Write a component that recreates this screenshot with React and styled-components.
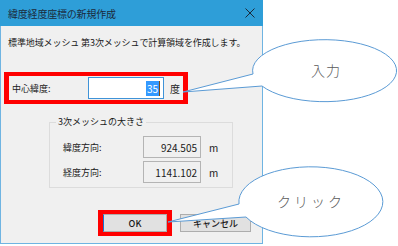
import React from "react";
import styled, { createGlobalStyle } from "styled-components";

const GlobalStyle = createGlobalStyle`
  html, body {
    margin: 0;
    padding: 0;
    background: #ffffff;
  }
  body {
    font-family: "Noto Sans CJK JP", "Noto Sans", sans-serif;
  }
`;

const JP = `"Noto Sans CJK JP", "Noto Sans", sans-serif`;

const Canvas = styled.div`
  position: relative;
  width: 398px;
  height: 246px;
  background: #ffffff;
  overflow: hidden;
`;

const Dialog = styled.div`
  width: 263px;
  height: 244px;
  box-sizing: border-box;
  background: #f0f0f0;
  border: 1px solid #6fb4e2;
  border-top: none;
  display: flex;
  flex-direction: column;
`;

const TitleBar = styled.div`
  height: 26px;
  margin: 0 -1px;
  background: #2e9ed8;
  display: flex;
  align-items: center;
  justify-content: space-between;
  padding: 0 8px 0 8px;
  flex-shrink: 0;
`;

const Title = styled.span`
  font-family: ${JP};
  font-size: 10px;
  color: #1b2a3a;
  letter-spacing: -0.2px;
`;

const Body = styled.div`
  display: flex;
  flex-direction: column;
  padding-left: 3px;
`;

const Message = styled.div`
  margin: 11px 0 0 4px;
  font-family: ${JP};
  font-size: 9px;
  line-height: 12px;
  color: #1a1a1a;
  white-space: nowrap;
  letter-spacing: -0.1px;
`;

const Highlight = styled.div`
  box-sizing: border-box;
  border-style: solid;
  border-color: #ff0000;
  border-width: ${(p) => p.$bw || "4px 5px"};
  display: flex;
  align-items: center;
`;

const FieldRow = styled(Highlight)`
  margin-top: 23px;
  width: 184px;
  height: 32px;
  padding-left: 3px;
`;

const Label = styled.span`
  font-family: ${JP};
  font-size: 9px;
  color: #1a1a1a;
  width: ${(p) => p.$w}px;
  flex-shrink: 0;
  white-space: nowrap;
`;

const Input = styled.div`
  box-sizing: border-box;
  width: 76px;
  height: 22px;
  background: #ffffff;
  border: 1px solid #3f93d8;
  display: flex;
  align-items: center;
  justify-content: flex-end;
  padding-right: 3px;
`;

const Selected = styled.span`
  background: #3399ff;
  color: #ffffff;
  font-family: ${JP};
  font-size: 10px;
  line-height: 15px;
  padding: 0 1px;
`;

const Caret = styled.span`
  width: 1px;
  height: 15px;
  background: #7a4a1a;
`;

const Unit = styled.span`
  font-family: ${JP};
  font-size: ${(p) => p.$size || 9}px;
  color: #1a1a1a;
  margin-left: ${(p) => p.$gap}px;
`;

const Group = styled.div`
  position: relative;
  margin: 18px 0 0 45px;
  width: 184px;
  height: 66px;
  box-sizing: border-box;
  border: 1px solid #dcdcdc;
  padding: 13px 0 0 13px;
  display: flex;
  flex-direction: column;
  gap: 3px;
`;

const Caption = styled.span`
  position: absolute;
  top: -7px;
  left: 6px;
  padding: 0 2px;
  background: #f0f0f0;
  font-family: ${JP};
  font-size: 9px;
  line-height: 12px;
  color: #1a1a1a;
  white-space: nowrap;
`;

const SizeRow = styled.div`
  display: flex;
  align-items: center;
`;

const ValueBox = styled.div`
  box-sizing: border-box;
  width: 58px;
  height: 22px;
  border: 1px solid #b4b4b4;
  background: #f0f0f0;
  display: flex;
  align-items: center;
  justify-content: flex-end;
  padding-right: 3px;
  font-family: ${JP};
  font-size: 10px;
  color: #1a1a1a;
`;

const ButtonRow = styled.div`
  margin: 22px 0 0 94px;
  display: flex;
  align-items: center;
`;

const OkFrame = styled(Highlight)`
  width: 74px;
  height: 26px;
`;

const Button = styled.div`
  box-sizing: border-box;
  width: ${(p) => p.$w}px;
  height: 18px;
  background: #e1e1e1;
  border: 1px solid #adadad;
  border-left-color: ${(p) => (p.$focus ? "#1a73d0" : "#adadad")};
  display: flex;
  align-items: center;
  justify-content: center;
  font-family: ${JP};
  font-size: 9px;
  font-weight: 500;
  color: #1a1a1a;
  margin-left: ${(p) => p.$gap || 0}px;
`;

const Overlay = styled.svg`
  position: absolute;
  left: 0;
  top: 0;
  pointer-events: none;
`;

const CloseIcon = () => (
  <svg width="10" height="10" viewBox="0 0 10 10">
    <path d="M0.5 0.5 L9.5 9.5 M9.5 0.5 L0.5 9.5" stroke="#1b2a3a" strokeWidth="1" />
  </svg>
);

const callouts = [
  {
    d: "M183 92 L262 86 A72 31 0 1 0 253 74 Z",
    text: "入力",
    x: 326,
    y: 76,
    spacing: 1,
  },
  {
    d: "M168 222 L246 217 A72 35 0 1 0 239 204 Z",
    text: "クリック",
    x: 311,
    y: 207,
    spacing: 3,
  },
];

export default function App() {
  return (
    <>
      <GlobalStyle />
      <Canvas>
        <Dialog>
          <TitleBar>
            <Title>緯度経度座標の新規作成</Title>
            <CloseIcon />
          </TitleBar>
          <Body>
            <Message>標準地域メッシュ 第3次メッシュで計算領域を作成します。</Message>
            <FieldRow>
              <Label $w={76}>中心緯度:</Label>
              <Input>
                <Selected>35</Selected>
                <Caret />
              </Input>
              <Unit $gap={6} $size={10}>度</Unit>
            </FieldRow>
            <Group>
              <Caption>3次メッシュの大きさ</Caption>
              <SizeRow>
                <Label $w={80}>緯度方向:</Label>
                <ValueBox>924.505</ValueBox>
                <Unit $gap={8} $size={10}>m</Unit>
              </SizeRow>
              <SizeRow>
                <Label $w={80}>経度方向:</Label>
                <ValueBox>1141.102</ValueBox>
                <Unit $gap={8} $size={10}>m</Unit>
              </SizeRow>
            </Group>
            <ButtonRow>
              <OkFrame $bw="4px 5px">
                <Button $w={64} $focus>OK</Button>
              </OkFrame>
              <Button $w={71} $gap={8}>キャンセル</Button>
            </ButtonRow>
          </Body>
        </Dialog>
        <Overlay width="398" height="246">
          {callouts.map((c) => (
            <g key={c.text}>
              <path d={c.d} fill="#ffffff" stroke="#5b9bd5" strokeWidth="1" />
              <text
                x={c.x}
                y={c.y}
                textAnchor="middle"
                fontFamily={JP}
                fontSize="14"
                fontWeight="300"
                fill="#5a5a5a"
                letterSpacing={c.spacing}
              >
                {c.text}
              </text>
            </g>
          ))}
        </Overlay>
      </Canvas>
    </>
  );
}
